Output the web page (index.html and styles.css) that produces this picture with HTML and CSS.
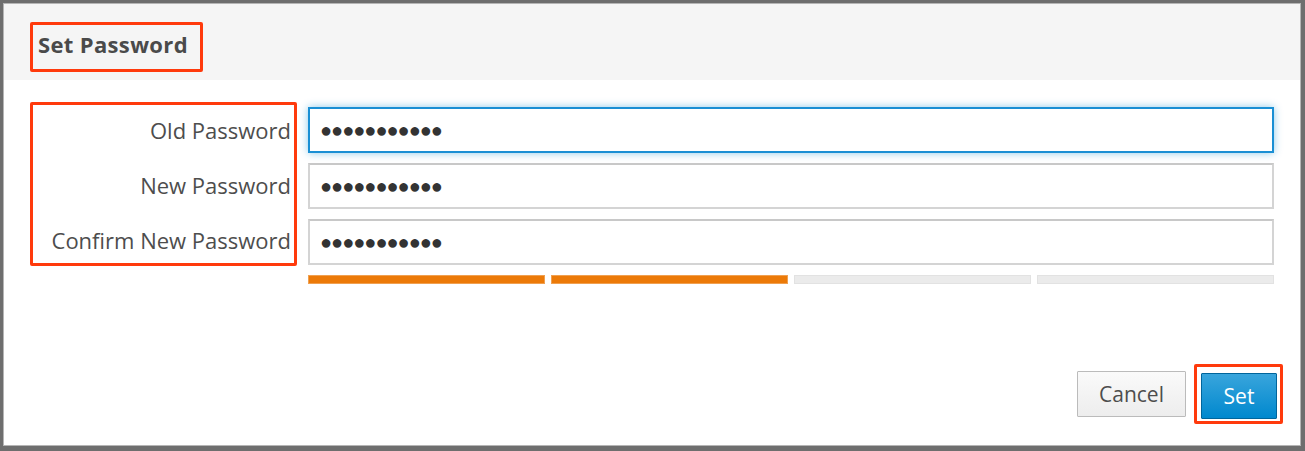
FILE: index.html
```html
<!DOCTYPE html>
<html>
<head>
<meta charset="utf-8">
<link rel="stylesheet" href="styles.css">
</head>
<body>
<div class="frame">
  <div class="modal">
    <div class="header">
      <h1 class="title mark">Set Password</h1>
    </div>
    <div class="body">
      <div class="form">
        <div class="labels mark">
          <div class="label">Old Password</div>
          <div class="label">New Password</div>
          <div class="label">Confirm New Password</div>
        </div>
        <div class="fields">
          <div class="input focus">●●●●●●●●●●●</div>
          <div class="input">●●●●●●●●●●●</div>
          <div class="input">●●●●●●●●●●●</div>
          <div class="strength">
            <span class="seg on"></span>
            <span class="seg on"></span>
            <span class="seg"></span>
            <span class="seg"></span>
          </div>
        </div>
      </div>
      <div class="footer">
        <button class="btn btn-default">Cancel</button>
        <div class="mark btn-mark"><button class="btn btn-primary">Set</button></div>
      </div>
    </div>
  </div>
</div>
</body>
</html>
```
FILE: styles.css
```css
* { box-sizing: border-box; }
html, body { margin: 0; padding: 0; }
body {
  width: 1305px;
  height: 451px;
  overflow: hidden;
  font-family: "Open Sans", "Noto Sans", sans-serif;
  color: #4d4d4d;
  background: #fff;
}
.frame {
  width: 1305px;
  height: 451px;
  border-style: solid;
  border-color: #6e6e6e;
  border-width: 3px 4px 5px 3px;
}
.modal {
  height: 100%;
  border: 1px solid #b5b5b5;
  background: #fff;
  display: flex;
  flex-direction: column;
}
.header {
  height: 76px;
  background: #f5f5f5;
  padding: 18px 0 0 26px;
}
.mark {
  border: 3px solid #ff3a0c;
  border-radius: 2px;
}
.title {
  margin: 0;
  display: inline-block;
  width: 173px;
  height: 50px;
  font-size: 22px;
  font-weight: 700;
  letter-spacing: 0.35px;
  color: #4a4a4a;
  padding: 6px 0 0 5px;
  line-height: 26px;
}
.body {
  flex: 1;
  padding: 22px 26px 0 26px;
  display: flex;
  flex-direction: column;
}
.form {
  display: flex;
  align-items: flex-start;
}
.labels {
  width: 267px;
  height: 164px;
  padding: 3px 3px 0 0;
  display: flex;
  flex-direction: column;
  gap: 10px;
  text-align: right;
  margin-right: 11px;
}
.label {
  height: 46px;
  line-height: 44px;
  font-size: 22px;
  color: #4d4d4d;
}
.fields {
  flex: 1;
  padding-top: 5px;
  display: flex;
  flex-direction: column;
  gap: 10px;
}
.input {
  height: 46px;
  border: 2px solid #d4d4d4;
  border-top-color: #c8c8c8;
  background: #fff;
  padding: 0 10px;
  line-height: 42px;
  font-size: 20px;
  letter-spacing: -1px;
  color: #333;
}
.input.focus {
  border-color: #1a8fd4;
  box-shadow: 0 0 8px rgba(0, 136, 206, 0.45);
}
.strength {
  display: flex;
  gap: 6px;
  height: 9px;
}
.seg {
  flex: 1;
  background: #ebebeb;
  border: 1px solid #e2e2e2;
}
.seg.on {
  background: #ec7a08;
  border-color: #f0a050;
}
.footer {
  margin-top: auto;
  margin-bottom: 21px;
  display: flex;
  justify-content: flex-end;
  align-items: center;
  gap: 8px;
}
.btn-mark {
  width: 89px;
  height: 60px;
  padding: 6px 0 0 4px;
  margin-right: -9px;
}
.btn {
  font-family: inherit;
  font-size: 21px;
  height: 46px;
  border-radius: 1px;
  cursor: pointer;
}
.btn-default {
  width: 109px;
  background: linear-gradient(#fafafa, #ededed);
  border: 1px solid #bbb;
  color: #4d4d4d;
}
.btn-primary {
  width: 76px;
  background: linear-gradient(#39a5dc, #0088ce);
  border: 1px solid #00659c;
  color: #fff;
}
```
